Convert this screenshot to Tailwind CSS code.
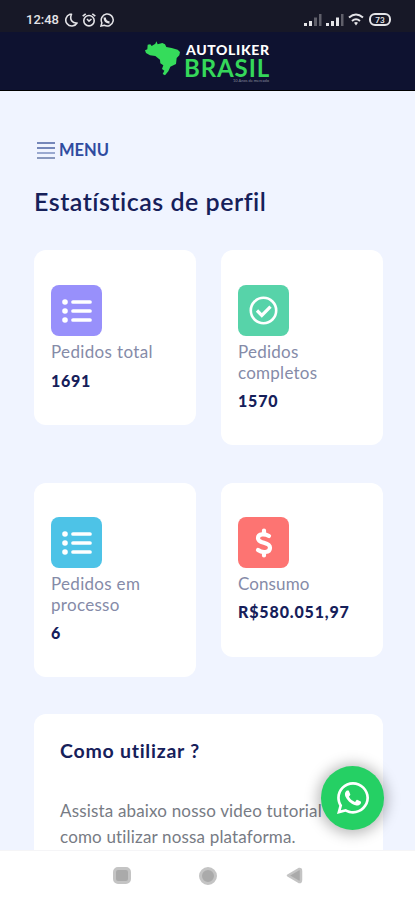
<!DOCTYPE html>
<html lang="pt-BR">
  <head>
    <meta charset="UTF-8" />
    <meta name="viewport" content="width=device-width, initial-scale=1.0" />
    <title>Autoliker Brasil</title>
    <script src="https://cdn.jsdelivr.net/npm/@tailwindcss/browser@4"></script>
  </head>
  <body class="h-[900px] overflow-hidden bg-[#f0f4ff] font-['Lato',sans-serif] flex flex-col">

    <!-- Header -->
    <header class="h-[91px] shrink-0 bg-[#0e1230] border-b border-black">
      <div class="h-[32px] bg-[#171827] pt-[7px] pl-[26px] pr-[24px] flex items-center justify-between text-[#e4e4e8]">
        <div class="flex items-center gap-[4px]">
          <span class="w-[35px] text-[13px] leading-[16px] font-medium font-['Roboto',sans-serif]">12:48</span>
          <svg class="w-[13px] h-[14px]" viewBox="0 0 13 14" fill="none" stroke="currentColor" stroke-width="1.6" stroke-linejoin="round"><path d="M5 1.3A6 6 0 1 0 12 10C8 10.500 4 7 6.500 1.300Z" /></svg>
          <svg class="w-[14px] h-[14px]" viewBox="0 0 14 14" fill="none" stroke="currentColor" stroke-width="1.6"><circle cx="7" cy="7.700" r="5.200" /><path d="M.7 3.200 3.700.8M13.300 3.200 10.300.8M5 6l2 2.200L9.500 6" /></svg>
          <svg class="w-[14px] h-[14px]" viewBox="0 0 14 14" fill="none" stroke="currentColor" stroke-width="1.500"><path d="M1 13l.9-3.200A6 6 0 1 1 4.200 12.200Z" /><path d="M4.700 4.500c0 2.800 2 4.800 4.800 5" stroke-width="2.300" /></svg>
        </div>
        <div class="flex items-center">
          <svg class="w-[18px] h-[13px]" viewBox="0 0 18 13" fill="currentColor"><path d="M0 10h3v3H0zM5 8h3v5H5z" /><path d="M10 4.500h3V13h-3zM15 1h2.500v12H15z" opacity=".35" /></svg>
          <svg class="w-[18px] h-[13px] ml-[4px]" viewBox="0 0 18 13" fill="currentColor"><path d="M0 10h3v3H0zM5 8h3v5H5zM10 4.500h3V13h-3z" /><path d="M15 1h2.500v12H15z" opacity=".35" /></svg>
          <svg class="w-[16px] h-[13px] ml-[4px]" viewBox="0 0 16 13" fill="none" stroke="currentColor" stroke-width="2"><path d="M1 4.500Q8-1.500 15 4.500M4 8q4-3.500 8 0" /><path d="M6 9.700q2-1.500 4 0L8 12.500z" fill="currentColor" stroke="none" /></svg>
          <span class="ml-[5px] w-[22px] h-[13px] rounded-[6px] border-2 border-current flex items-center justify-center text-[8px] leading-none font-bold">73</span>
        </div>
      </div>
      <div class="flex pl-[145px] pt-[9px]">
        <svg class="w-[35px] h-[36px]" viewBox="0 0 105 106" fill="#35dc5b"><path d="M0 27 7 24 8 10 16 9 20 14 31 7 34 0 38 9 52 5 60 9 64 17 80 20 98 25 105 32 103 42 95 50 93 68 76 76 70 90 60 102 53 98 58 88 51 83 55 72 46 66 45 55 31 44 15 42 3 35Z" /></svg>
        <div class="ml-[4px] w-[87px]">
          <div class="text-[14px] leading-[17px] pl-[2px] font-black text-white whitespace-nowrap tracking-[0.65px]">AUTOLIKER</div>
          <div class="text-[24px] leading-[20px] font-bold text-[#35d85a] whitespace-nowrap tracking-[0.9px]">BRASIL</div>
          <div class="pr-[2px] text-right text-[4px] leading-[5px] text-[#85899c] whitespace-nowrap">10 Anos de mercado</div>
        </div>
      </div>
    </header>

    <main class="grow min-h-0 overflow-hidden pl-[34px] pr-[32px] pt-[47px]">
      <div class="h-[24px] pl-[3px] flex items-center gap-[4px]">
        <span class="mt-[1px] w-[18px] h-[17px] flex flex-col justify-between">
          <i class="h-[2px] bg-[#7587ba]"></i><i class="h-[2px] bg-[#7587ba]"></i><i class="h-[2px] bg-[#9aa9d0]"></i><i class="h-[2px] bg-[#8998bd]"></i>
        </span>
        <span class="text-[16.500px] leading-[24px] font-bold text-[#2f4ba0]">MENU</span>
      </div>
      <h1 class="mt-[23px] h-[65px] text-[25px] leading-[32px] font-semibold text-[#16205a] whitespace-nowrap tracking-[0.5px]">Estatísticas de perfil</h1>

      <!-- Stats -->
      <section class="grid grid-cols-[162px_162px] gap-x-[25px] gap-y-[38px] items-start text-[17px] leading-[20.500px] text-[#858ba8]">
        <div class="h-[175px] bg-white rounded-[12px] px-[17px] pt-[35px]">
          <div class="w-[51px] h-[51px] rounded-[8px] bg-[#9890fb] flex items-center justify-center">
            <svg class="w-[30px] h-[24px]" viewBox="0 0 30 24" stroke="#fff" stroke-width="3.700" stroke-linecap="round"><path d="M11 3H28M11 12H28M11 21H28" /><path d="M3 3h.01M3 12h.01M3 21h.01" stroke-width="5.600" /></svg>
          </div>
          <p class="mt-[6px] tracking-[0.35px]">Pedidos total</p>
          <p class="mt-[8px] font-black text-[16px] text-[#16205a] tracking-[0.7px]">1691</p>
        </div>
        <div class="h-[195px] bg-white rounded-[12px] px-[17px] pt-[35px]">
          <div class="w-[51px] h-[51px] rounded-[8px] bg-[#57d3a9] flex items-center justify-center">
            <svg class="w-[29px] h-[29px]" viewBox="0 0 29 29" fill="none" stroke="#fff" stroke-width="2.600"><circle cx="14.500" cy="14.500" r="12.700" /><path d="m8 14.500 4.800 4.800 8.700-8.700" stroke-width="3.300" /></svg>
          </div>
          <p class="mt-[6px] tracking-[0.25px]">Pedidos completos</p>
          <p class="mt-[8px] font-black text-[16px] text-[#16205a] tracking-[0.8px]">1570</p>
        </div>
        <div class="h-[194px] bg-white rounded-[12px] px-[17px] pt-[34px]">
          <div class="w-[51px] h-[51px] rounded-[8px] bg-[#4dc3e7] flex items-center justify-center">
            <svg class="w-[30px] h-[24px]" viewBox="0 0 30 24" stroke="#fff" stroke-width="3.700" stroke-linecap="round"><path d="M11 3H28M11 12H28M11 21H28" /><path d="M3 3h.01M3 12h.01M3 21h.01" stroke-width="5.600" /></svg>
          </div>
          <p class="mt-[6px] tracking-[0.3px]">Pedidos em processo</p>
          <p class="mt-[8px] font-black text-[16px] text-[#16205a]">6</p>
        </div>
        <div class="h-[174px] bg-white rounded-[12px] px-[17px] pt-[34px]">
          <div class="w-[51px] h-[51px] rounded-[8px] bg-[#fd7472] flex items-center justify-center">
            <svg class="w-[18px] h-[30px]" viewBox="0 0 18 30" fill="none" stroke="#fff" stroke-width="4.200" stroke-linecap="round" stroke-linejoin="round"><path d="M14 8C10.500 5.800 3 5 3 10.200c0 6 12 3.300 12 9.500 0 5.300-8 5.300-12 2.300" /><path d="M9 2.500V6M9 24v3.500" /></svg>
          </div>
          <p class="mt-[6px] tracking-[0.1px]">Consumo</p>
          <p class="mt-[7px] font-black text-[16px] text-[#16205a] tracking-[0.85px]">R$580.051,97</p>
        </div>
      </section>

      <!-- Tutorial -->
      <section class="mt-[37px] h-[180px] bg-white rounded-t-[12px] px-[26px] pt-[24px]">
        <h2 class="text-[19.500px] leading-[26px] font-bold text-[#16205a] tracking-[0.75px]">Como utilizar ?</h2>
        <p class="mt-[34px] text-[17px] leading-[26px] text-[#777b84] whitespace-nowrap tracking-[0.17px]">Assista abaixo nosso video tutorial<br />como utilizar nossa plataforma.</p>
      </section>
    </main>

    <!-- WhatsApp button -->
    <a class="absolute left-[321px] top-[766px] w-[63px] h-[64px] rounded-full bg-[#25d064] shadow-[0_1px_14px_3px_rgba(0,0,0,0.28)] flex items-center justify-center">
      <svg class="w-[32px] h-[32px]" viewBox="0 32 448 448" fill="#fff"><path d="M380.9 97.1C339 55.1 283.2 32 223.9 32c-122.4 0-222 99.6-222 222 0 39.1 10.2 77.3 29.6 111L0 480l117.7-30.9c32.4 17.7 68.9 27 106.1 27h.1c122.3 0 224.1-99.6 224.1-222 0-59.3-25.2-115-67.1-157zm-157 341.6c-33.2 0-65.7-8.9-94-25.7l-6.7-4-69.8 18.3L72 359.2l-4.4-7c-18.5-29.4-28.2-63.3-28.2-98.2 0-101.7 82.8-184.5 184.6-184.5 49.3 0 95.6 19.2 130.4 54.1 34.8 34.9 56.2 81.2 56.1 130.5 0 101.8-84.9 184.6-186.6 184.6zm101.200-138.200c-5.500-2.800-32.800-16.200-37.900-18-5.100-1.900-8.800-2.800-12.500 2.800-3.700 5.600-14.300 18-17.600 21.800-3.200 3.700-6.500 4.200-12 1.400-32.600-16.300-54-29.100-75.500-66-5.700-9.800 5.700-9.100 16.300-30.300 1.800-3.700.9-6.900-.5-9.700-1.400-2.800-12.500-30.100-17.100-41.200-4.500-10.800-9.100-9.300-12.500-9.500-3.200-.2-6.900-.2-10.600-.2-3.700 0-9.700 1.400-14.800 6.900-5.100 5.600-19.400 19-19.400 46.300 0 27.300 19.900 53.700 22.600 57.400 2.800 3.700 39.100 59.700 94.800 83.800 35.200 15.200 49 16.500 66.600 13.900 10.700-1.600 32.800-13.400 37.400-26.400 4.600-13 4.600-24.100 3.200-26.400-1.300-2.500-5-3.900-10.500-6.600z" /></svg>
    </a>

    <!-- Navigation bar -->
    <nav class="relative h-[50px] shrink-0 bg-white border-t border-[#f5f5f7] flex items-center pl-[113px] text-[#aaa]">
      <span class="w-[18px] h-[17px] rounded-[5px] bg-current border-[3px] border-[#c4c4c4]"></span>
      <span class="ml-[68px] w-[18px] h-[18px] rounded-full bg-current border-[3px] border-[#c4c4c4]"></span>
      <svg class="ml-[69px] w-[17px] h-[17px]" viewBox="0 0 17 17"><path d="M2 8.500 13 2q2-.5 2 2v9q0 2.500-2 2Z" fill="currentColor" stroke="#c4c4c4" stroke-width="2.500" stroke-linejoin="round" /></svg>
    </nav>

  </body>
</html>
